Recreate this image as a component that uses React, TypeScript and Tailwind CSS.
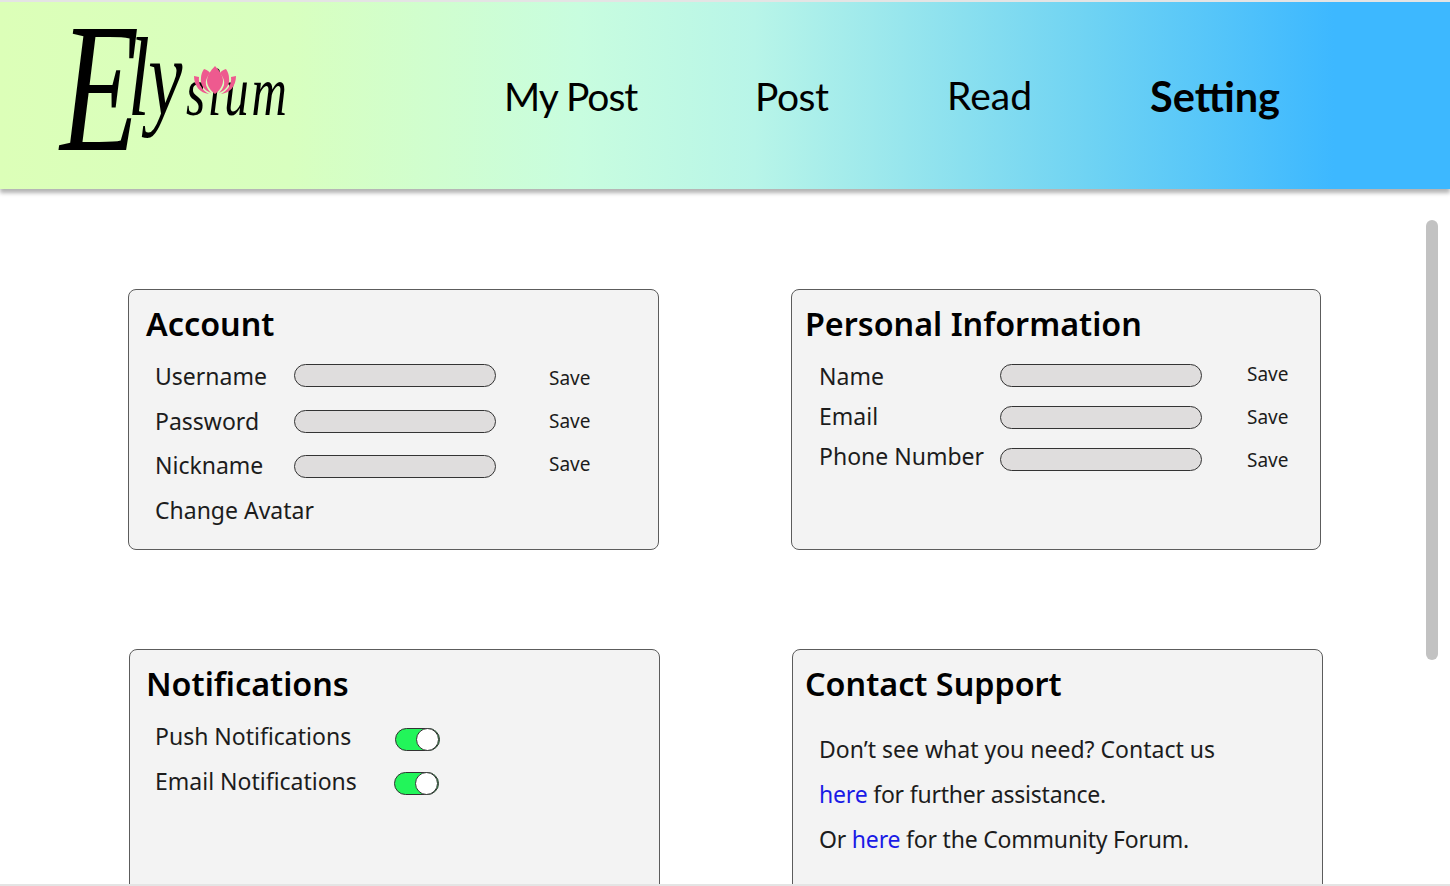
function Logo() {
  return (
    <svg viewBox="0 0 504 187" className="h-[187px] w-[504px] shrink-0 fill-black font-['Liberation_Serif',serif] italic">
      <text transform="translate(60 113) scale(0.7 1)">
        <tspan fontSize="185" dy="35">E</tspan>
        <tspan fontSize="112" dy="-35" dx="-16">l</tspan>
        <tspan fontSize="110" dx="-2">y</tspan>
        <tspan fontSize="70" dx="5" letterSpacing="4">sium</tspan>
      </text>
      <g transform="translate(193 64)" className="fill-[#ee5a8f]">
        <path d="M22 0C17 5 14 10 14 15c0 5 4 10 8 13 4-3 8-8 8-13 0-5-3-10-8-15Z" />
        <path d="M11 3c3 1 5 2 6 4-3 4-5 8-4 12 1 3 3 6 5 8-7-3-11-8-10-15 0-3 1-6 3-9Z" />
        <path d="M33 3c-3 1-5 2-6 4 3 4 5 8 4 12-1 3-3 6-5 8 7-3 11-8 10-15 0-3-1-6-3-9Z" />
        <path d="M1 10l5 1c-1 7 3 13 10 17C7 27 1 20 1 10Z" />
        <path d="M43 10l-5 1c1 7-3 13-10 17 9-1 15-8 15-18Z" />
      </g>
    </svg>
  );
}

function NavBar() {
  return (
    <header className="relative z-10 flex h-[187px] items-center bg-[linear-gradient(90deg,#dcffb8_0%,#d8ffbf_20%,#c8fddf_40%,#b8f5e8_52%,#6fd3f3_75%,#3db8ff_92%,#3db8ff_100%)] shadow-[0_4px_4px_rgba(0,0,0,0.3)] font-['Lato',sans-serif] text-[39px] text-black">
      <Logo />
      <span className="mt-[2px] w-[251px] tracking-[-1px]">My Post</span>
      <span className="mt-[2px] w-[192px] tracking-[-0.5px]">Post</span>
      <span className="w-[203px]">Read</span>
      <span className="mt-[2px] text-[41.5px] font-bold">Setting</span>
    </header>
  );
}

function Card({ title, className, children }: { title: string; className: string; children: React.ReactNode }) {
  return (
    <section className={`h-[261px] rounded-lg border border-[#5c5c5c] bg-[#f3f3f3] pt-[11px] ${className}`}>
      <h2 className="text-[32.3px] font-semibold leading-[44px] text-black">{title}</h2>
      {children}
    </section>
  );
}

function Field({ className = "" }: { className?: string }) {
  return <div className={`h-[23px] w-[202px] rounded-full border border-[#333] bg-[#dfdddd] ${className}`} />;
}

function Toggle({ className }: { className: string }) {
  return (
    <div className={`flex h-[23px] w-[45px] items-center justify-end rounded-full border border-[#333] bg-[#22f55a] ${className}`}>
      <div className="h-[23px] w-[23px] rounded-full border border-[#333] bg-white" />
    </div>
  );
}

export default function App() {
  return (
    <div className="relative h-[886px] w-[1450px] overflow-hidden border-y-2 border-[#e4e4e4] bg-white font-['Noto_Sans','Open_Sans',sans-serif]">
      <NavBar />
      <main className="pl-[128px] pt-[100px] text-[23px] leading-[32px] text-[#1c1c1c]">
        <div className="grid grid-cols-[531px_531px] gap-x-[132px] gap-y-[99px]">
          <Card title="Account" className="w-[531px] pl-[17px]">
            <div className="mt-[15px] flex pl-[9px]">
              <div className="flex w-[139px] flex-col gap-[12.7px]">
                <span>Username</span>
                <span>Password</span>
                <span>Nickname</span>
                <span className="whitespace-nowrap">Change Avatar</span>
              </div>
              <div className="mt-[4px] flex flex-col">
                <Field />
                <Field className="mt-[23px]" />
                <Field className="mt-[22px]" />
              </div>
              <div className="ml-[53px] mt-[6px] flex flex-col gap-[18px] text-[19px] leading-[25px]">
                <span>Save</span>
                <span>Save</span>
                <span>Save</span>
              </div>
            </div>
          </Card>
          <Card title="Personal Information" className="w-[530px] pl-[13px]">
            <div className="mt-[15px] flex pl-[14px]">
              <div className="flex w-[181px] flex-col gap-[8px]">
                <span>Name</span>
                <span>Email</span>
                <span className="whitespace-nowrap">Phone Number</span>
              </div>
              <div className="mt-[4px] flex flex-col gap-[19px]">
                <Field />
                <Field />
                <Field />
              </div>
              <div className="ml-[45px] mt-[2px] flex flex-col gap-[18px] text-[19px] leading-[25px]">
                <span>Save</span>
                <span>Save</span>
                <span>Save</span>
              </div>
            </div>
          </Card>
          <Card title="Notifications" className="ml-px w-[531px] pl-[16px]">
            <div className="mt-[15px] flex flex-col gap-[13px] pl-[9px]">
              <div className="flex">
                <span className="w-[240px]">Push Notifications</span>
                <Toggle className="mt-[8px]" />
              </div>
              <div className="flex">
                <span className="w-[239px]">Email Notifications</span>
                <Toggle className="mt-[7px]" />
              </div>
            </div>
          </Card>
          <Card title="Contact Support" className="ml-px w-[531px] pl-[12px]">
            <div className="mt-[28px] flex flex-col gap-[13px] pl-[14px]">
              <p>Don’t see what you need? Contact us</p>
              <p className="tracking-[-0.2px]"><span className="text-[#1a1ae6]">here</span> for further assistance.</p>
              <p className="tracking-[-0.2px]">Or <span className="text-[#1a1ae6]">here</span> for the Community Forum.</p>
            </div>
          </Card>
        </div>
      </main>
      <div className="absolute left-[1426px] top-[218px] h-[440px] w-[12px] rounded-full bg-[#c2c2c2]" />
    </div>
  );
}
